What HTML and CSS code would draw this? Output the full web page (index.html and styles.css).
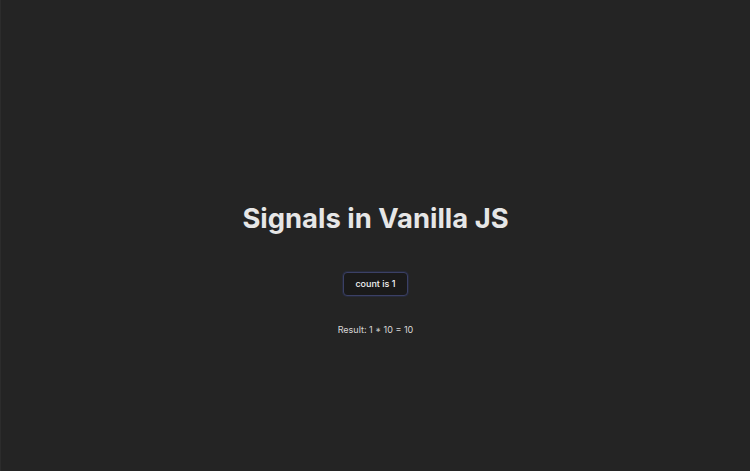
FILE: index.html
```html
<!DOCTYPE html>
<html lang="en">
<head>
<meta charset="UTF-8">
<title>Signals in Vanilla JS</title>
<link rel="stylesheet" href="styles.css">
</head>
<body>
<div class="app">
  <h1 class="title">Signals in Vanilla JS</h1>
  <div class="card">
    <button class="counter" type="button">count is 1</button>
  </div>
  <p class="result">Result: 1 * 10 = 10</p>
</div>
</body>
</html>
```

FILE: styles.css
```css
html, body {
  margin: 0;
  padding: 0;
}
body {
  background: #242424;
  color: rgba(255, 255, 255, 0.87);
  font-family: Inter, "Noto Sans", sans-serif;
  font-size: 8px;
  line-height: 1.5;
  min-height: 100vh;
  display: flex;
  align-items: center;
  justify-content: center;
  border-left: 1px solid #2c2c2c;
  box-sizing: border-box;
  padding-top: 68px;
}
.app {
  display: flex;
  flex-direction: column;
  align-items: center;
  text-align: center;
}
.title {
  margin: 0;
  font-size: 27.4px;
  line-height: 1.1;
  font-weight: 700;
  color: #e6e6e6;
}
.card {
  padding-top: 38px;
}
.counter {
  font-family: Inter, "Noto Sans", sans-serif;
  font-size: 9px;
  font-weight: 500;
  line-height: 12px;
  color: #f2f2f2;
  background: #1a1a1a;
  border: 1px solid #3b4065;
  border-radius: 4px;
  padding: 5px 11px;
  box-shadow: 0 0 0 1px #262a3a;
}
.result {
  margin: 28px 0 0;
  font-size: 9px;
  line-height: 12px;
  color: #d8d8d8;
}
```
